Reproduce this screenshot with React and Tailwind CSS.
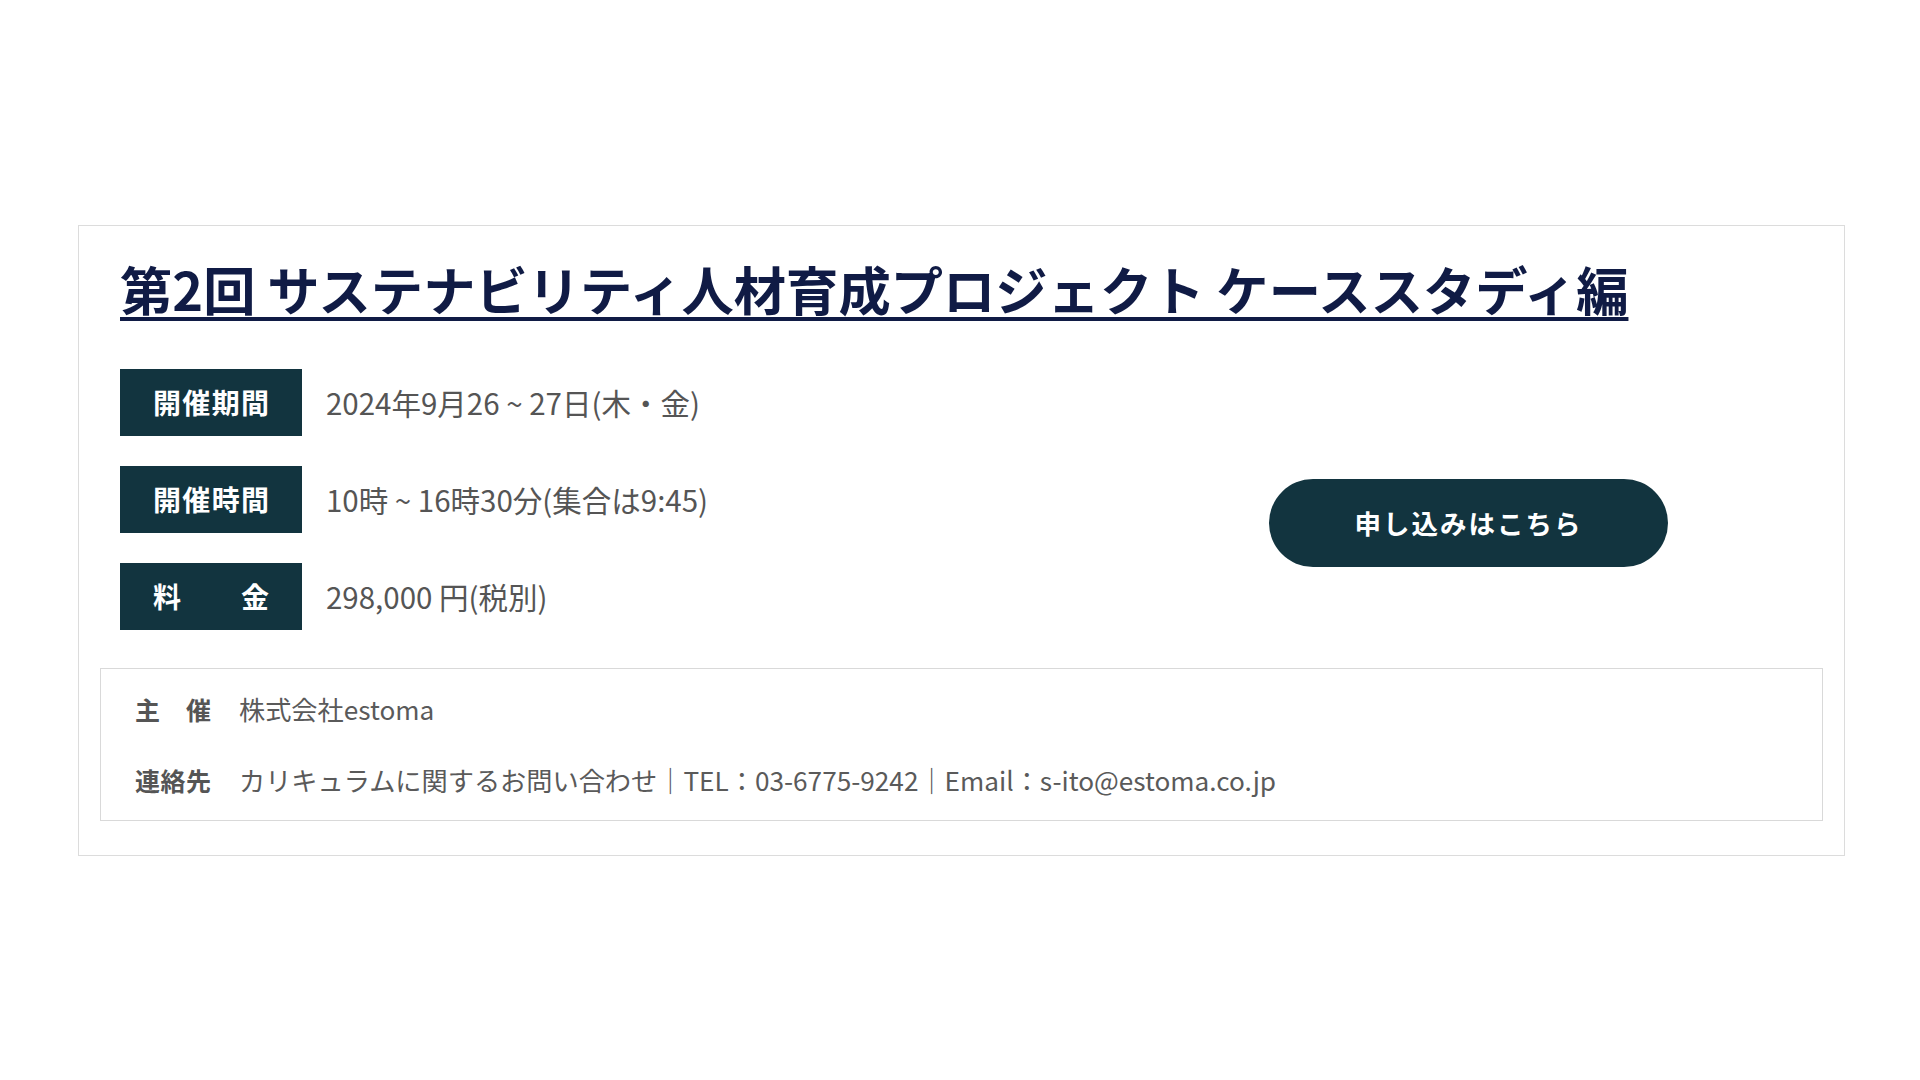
const rows = [
  { label: '開催期間', value: '2024年9月26 ~ 27日(木・金)' },
  { label: '開催時間', value: '10時 ~ 16時30分(集合は9:45)' },
  { label: '料金', value: '298,000 円(税別)' },
];

const App = () => {
  return (
    <div
      className="min-h-screen bg-white pt-[225px]"
      style={{ fontFamily: '"Noto Sans CJK JP", "Noto Sans", sans-serif' }}
    >
      <div className="ml-[78px] w-[1767px] border border-[#dcdcdc] bg-white pb-[34px]">
        {/* Title */}
        <div className="pl-[41px] pt-[28px]">
          <a
            href="#"
            className="text-[52.3px] font-bold leading-[1.3] text-[#101b45] underline decoration-[4px] underline-offset-[6px]"
          >
            第2回 サステナビリティ人材育成プロジェクト ケーススタディ編
          </a>
        </div>

        {/* Schedule rows + button */}
        <div className="mt-[47px] flex pl-[41px] pr-[176px]">
          <div className="flex flex-col gap-[30px]">
            {rows.map((row) => (
              <div key={row.label} className="flex items-center">
                <div className="flex h-[67px] w-[182px] items-center bg-[#12343f] px-[33px]">
                  <span className="w-full text-[28px] font-bold leading-none text-white [text-align-last:justify]">
                    {row.label}
                  </span>
                </div>
                <span className="ml-[24px] text-[29.5px] leading-none text-[#555555]">{row.value}</span>
              </div>
            ))}
          </div>
          <a
            href="#"
            className="ml-auto mt-[110px] flex h-[88px] w-[399px] items-center justify-center rounded-full bg-[#12343f] text-[26.5px] font-bold tracking-[2px] text-white"
          >
            申し込みはこちら
          </a>
        </div>

        {/* Organizer */}
        <div className="mx-[21px] mt-[38px] flex flex-col gap-[31px] border border-[#d9d9d9] py-[20px] pl-[34px]">
          <div className="flex items-center leading-[40px]">
            <span className="w-[76px] text-[25px] font-bold text-[#555555] [text-align-last:justify]">主催</span>
            <span className="ml-[28px] text-[26.2px] text-[#5a5a5a]">株式会社estoma</span>
          </div>
          <div className="flex items-center leading-[40px]">
            <span className="w-[76px] text-[25px] font-bold text-[#555555] [text-align-last:justify]">連絡先</span>
            <span className="ml-[28px] text-[26.2px] text-[#5a5a5a]">
              カリキュラムに関するお問い合わせ｜TEL：03-6775-9242｜Email：s-ito@estoma.co.jp
            </span>
          </div>
        </div>
      </div>
    </div>
  );
};

export default App;
